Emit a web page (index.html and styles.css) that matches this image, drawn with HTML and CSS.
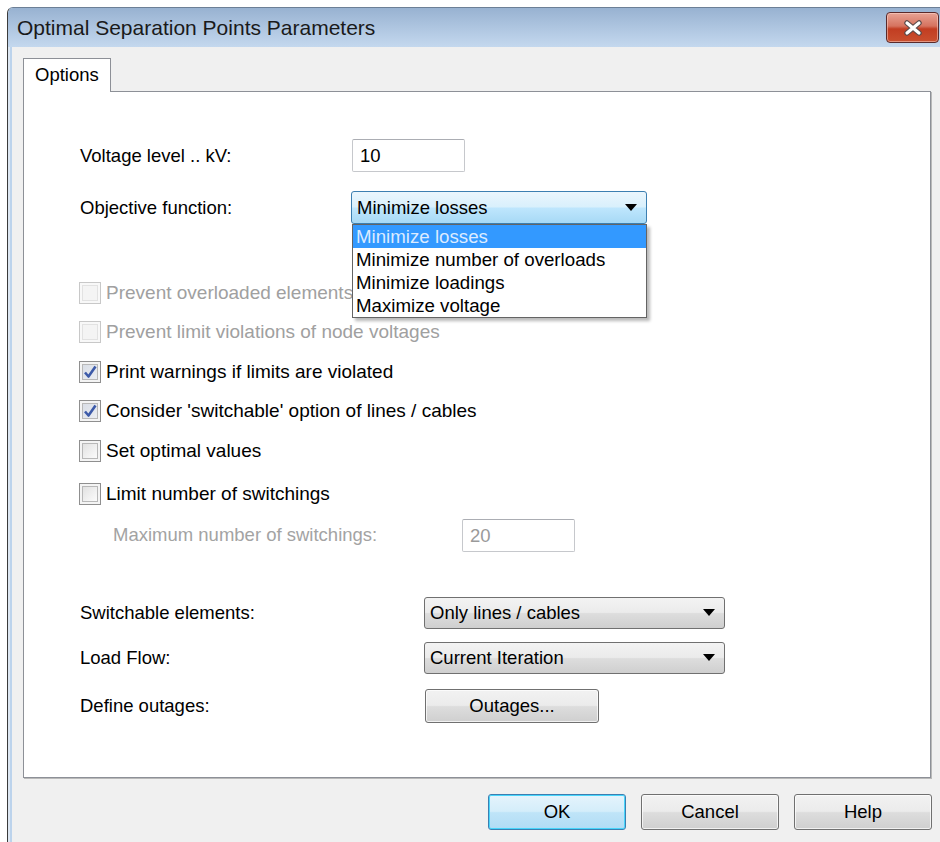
FILE: index.html
```html
<!DOCTYPE html>
<html lang="en">
<head>
<meta charset="utf-8">
<title>Optimal Separation Points Parameters</title>
<link rel="stylesheet" href="styles.css">
</head>
<body>
<div class="window">
  <div class="titlebar">
    <span class="title">Optimal Separation Points Parameters</span>
    <button class="close" aria-label="Close">
      <svg width="22" height="16" viewBox="0 0 22 16">
        <path d="M5 3 L17 13 M17 3 L5 13" stroke="#5a4a4a" stroke-width="5.5" stroke-linecap="round"/>
        <path d="M5 3 L17 13 M17 3 L5 13" stroke="#ffffff" stroke-width="3.2" stroke-linecap="round"/>
      </svg>
    </button>
  </div>
  <div class="client">
    <div class="tabs"><div class="tab">Options</div></div>
    <div class="panel">
      <div class="field first">
        <span class="label w-main">Voltage level .. kV:</span>
        <div class="edit">10</div>
      </div>
      <div class="field gap19">
        <span class="label w-main">Objective function:</span>
        <div class="combo-wrap">
          <div class="combo focused wide"><span>Minimize losses</span><i class="arrow"></i></div>
          <ul class="droplist">
            <li class="sel">Minimize losses</li>
            <li>Minimize number of overloads</li>
            <li>Minimize loadings</li>
            <li>Maximize voltage</li>
          </ul>
        </div>
      </div>

      <div class="checks">
        <div class="check disabled"><span class="box"></span><span>Prevent overloaded elements</span></div>
        <div class="check disabled"><span class="box"></span><span>Prevent limit violations of node voltages</span></div>
        <div class="check"><span class="box on"><svg width="16" height="16" viewBox="0 0 16 16"><path d="M3 8.5 L6.5 12.5 L13.5 2.5" fill="none" stroke="#3c5aa8" stroke-width="2.6" stroke-linejoin="round"/></svg></span><span>Print warnings if limits are violated</span></div>
        <div class="check"><span class="box on"><svg width="16" height="16" viewBox="0 0 16 16"><path d="M3 8.5 L6.5 12.5 L13.5 2.5" fill="none" stroke="#3c5aa8" stroke-width="2.6" stroke-linejoin="round"/></svg></span><span>Consider 'switchable' option of lines / cables</span></div>
        <div class="check"><span class="box"></span><span>Set optimal values</span></div>
        <div class="check last"><span class="box"></span><span>Limit number of switchings</span></div>
      </div>

      <div class="field sub">
        <span class="label dim w-sub">Maximum number of switchings:</span>
        <div class="edit dim">20</div>
      </div>

      <div class="field gap45 h32">
        <span class="label w-lower">Switchable elements:</span>
        <div class="combo lower"><span>Only lines / cables</span><i class="arrow"></i></div>
      </div>
      <div class="field gap13 h32">
        <span class="label w-lower">Load Flow:</span>
        <div class="combo lower"><span>Current Iteration</span><i class="arrow"></i></div>
      </div>
      <div class="field gap15 h34">
        <span class="label w-lower">Define outages:</span>
        <button class="btn outages">Outages...</button>
      </div>
    </div>
    <div class="buttons">
      <button class="btn dlg default">OK</button>
      <button class="btn dlg">Cancel</button>
      <button class="btn dlg">Help</button>
    </div>
  </div>
</div>
</body>
</html>
```

FILE: styles.css
```css
html, body {
  margin: 0;
  padding: 0;
  background: #ffffff;
  overflow: hidden;
}

body {
  font-family: "Liberation Sans", Arial, sans-serif;
  color: #000;
}

.window {
  margin: 7px 0 0 7px;
  width: 960px;
  height: 860px;
  border-left: 1px solid #3b3b3b;
  border-top: 1px solid #6c7f96;
  border-top-left-radius: 6px;
  background: #dde7f2;
  display: flex;
  flex-direction: column;
}

.titlebar {
  height: 39px;
  display: flex;
  align-items: center;
  background: linear-gradient(#98b2d1, #b7cde6 70%, #c4d8ee);
  border-top-left-radius: 5px;
  position: relative;
}

.title {
  font-size: 21px;
  color: #1a1a1a;
  padding-left: 9px;
}

.close {
  position: absolute;
  left: 878px;
  top: 4px;
  width: 53px;
  height: 31px;
  padding: 0;
  border: 1px solid #5a2a2a;
  border-radius: 4px;
  background: linear-gradient(#e7a395, #d6735f 45%, #c23d22 55%, #c9502f);
  display: flex;
  align-items: center;
  justify-content: center;
  box-shadow: inset 0 0 0 1px rgba(255, 220, 210, 0.5);
}

.client {
  flex: 1;
  margin-left: 2px;
  border-left: 2px solid #bcd3ec;
  background: #f0f0f0;
  padding: 11px 0 0 11px;
}

.tabs {
  display: flex;
  position: relative;
  z-index: 1;
  margin-bottom: -1px;
}

.tab {
  width: 75px;
  height: 33px;
  padding-left: 11px;
  border: 1px solid #8d9097;
  border-bottom: none;
  background: #fff;
  font-size: 18.5px;
  line-height: 31px;
}

.panel {
  width: 850px;
  height: 638px;
  border: 1px solid #8d9097;
  box-shadow: 1px 1px 0 #b9b9b9;
  background: #fff;
  padding: 47px 0 0 56px;
  position: relative;
}

.field {
  display: flex;
  align-items: center;
  height: 33px;
}

.gap19 { margin-top: 19px; }
.gap45 { margin-top: 45px; }
.gap13 { margin-top: 13px; }
.gap15 { margin-top: 15px; }
.h32 { height: 32px; }
.h34 { height: 34px; }

.label {
  font-size: 18.5px;
  flex: none;
}

.w-main { width: 272px; }
.w-lower { width: 344px; }
.w-sub { width: 349px; }

.label.dim { color: #a3a3a3; }

.sub {
  margin-top: 5px;
  padding-left: 33px;
}

.edit {
  box-sizing: border-box;
  width: 113px;
  height: 33px;
  border: 1px solid #c6c8cc;
  border-top-color: #abadb3;
  border-radius: 2px;
  background: #fff;
  font-size: 18.5px;
  line-height: 31px;
  padding-left: 7px;
}

.edit.dim { color: #9a9a9a; }

.combo-wrap {
  position: relative;
}

.combo {
  box-sizing: border-box;
  height: 32px;
  border: 1px solid #707070;
  border-radius: 3px;
  background: linear-gradient(#f3f3f3, #ebebeb 48%, #dddddd 52%, #cfcfcf);
  display: flex;
  align-items: center;
  justify-content: space-between;
  padding: 0 9px 0 5px;
  font-size: 18.5px;
}

.combo.wide {
  width: 296px;
  height: 33px;
  margin-left: -1px;
}

.combo.focused {
  border-color: #3c7fb1;
  background: linear-gradient(#eaf6fd, #d9f0fc 48%, #bee6fd 52%, #a7d9f5);
}

.combo.lower { width: 301px; }

.arrow {
  width: 0;
  height: 0;
  border-left: 6px solid transparent;
  border-right: 6px solid transparent;
  border-top: 7px solid #000;
}

.droplist {
  position: absolute;
  left: 0;
  top: 33px;
  width: 293px;
  margin: 0;
  padding: 0;
  list-style: none;
  background: #fff;
  border: 1px solid #646464;
  box-shadow: 3px 3px 3px rgba(0, 0, 0, 0.28);
  z-index: 5;
}

.droplist li {
  height: 23px;
  line-height: 23px;
  padding-left: 3px;
  font-size: 18.7px;
  white-space: nowrap;
}

.droplist li.sel {
  background: #3399ff;
  color: #dcebff;
}

.checks {
  margin-top: 49px;
}

.check {
  display: flex;
  align-items: center;
  height: 39.5px;
  font-size: 19px;
}

.check.last {
  margin-top: 3.5px;
}

.box {
  box-sizing: border-box;
  width: 22px;
  height: 22px;
  margin-right: 5px;
  margin-left: -1px;
  border: 1px solid #8f8f8f;
  background: linear-gradient(135deg, #dcdcdc, #f6f6f6 70%, #ffffff);
  box-shadow: inset 0 0 0 2px #f4f4f4, inset 0 0 0 3px #b8b8b8;
  display: flex;
  align-items: center;
  justify-content: center;
  flex: none;
}

.box.on {
  background: linear-gradient(135deg, #d6dbe4, #eef0f4);
}

.check.disabled {
  color: #a0a0a0;
}

.check.disabled .box {
  border-color: #c8c8c8;
  background: #f4f4f4;
  box-shadow: inset 0 0 0 2px #f8f8f8, inset 0 0 0 3px #e2e2e2;
}

.btn {
  box-sizing: border-box;
  font-family: "Liberation Sans", Arial, sans-serif;
  font-size: 18.5px;
  color: #000;
  border: 1px solid #707070;
  border-radius: 3px;
  background: linear-gradient(#f2f2f2, #ebebeb 48%, #dddddd 52%, #cfcfcf);
  box-shadow: inset 0 0 0 1px rgba(255, 255, 255, 0.7);
  padding: 0;
}

.outages {
  width: 174px;
  height: 34px;
  margin-left: 1px;
}

.buttons {
  display: flex;
  justify-content: flex-end;
  gap: 15px;
  width: 909px;
  margin-top: 16px;
}

.btn.dlg {
  width: 138px;
  height: 36px;
}

.btn.default {
  border-color: #3c7fb1;
  background: linear-gradient(#e5f4fc, #d4edfa 48%, #bfe4f8 52%, #b1dcf5);
  box-shadow: inset 0 0 0 1px #48d5fb;
}
```
